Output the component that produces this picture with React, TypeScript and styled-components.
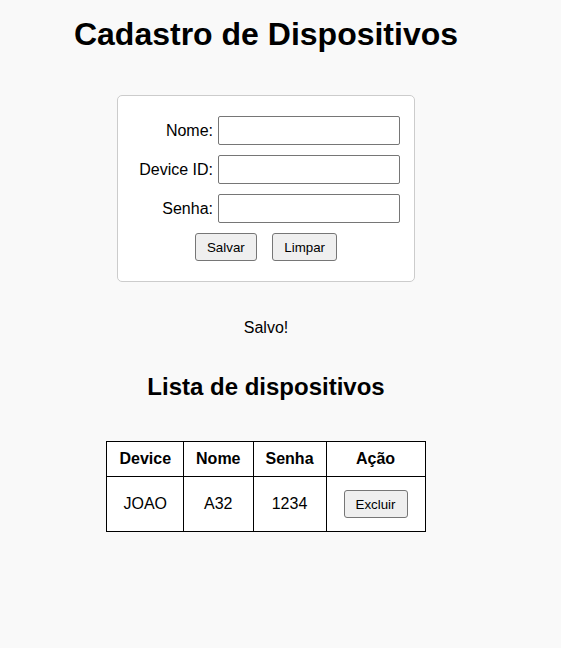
import React from "react";
import styled, { createGlobalStyle } from "styled-components";

const GlobalStyle = createGlobalStyle`
  html, body {
    margin: 0;
    padding: 0;
    background: #f9f9f9;
  }
  body {
    font-family: "Liberation Sans", Arial, sans-serif;
    color: #000;
  }
`;

const Page = styled.div`
  width: 532px;
  display: flex;
  flex-direction: column;
  align-items: center;
  text-align: center;
`;

const Title = styled.h1`
  font-size: 32px;
  font-weight: bold;
  margin: 16px 0 0;
  line-height: normal;
`;

const Card = styled.form`
  box-sizing: border-box;
  width: 298px;
  margin-top: 42px;
  padding: 20px 14px;
  background: #fff;
  border: 1px solid #ccc;
  border-radius: 5px;
  display: grid;
  grid-template-columns: 81px 182px;
  column-gap: 5px;
  row-gap: 10px;
  align-items: center;
`;

const Label = styled.label`
  font-size: 16px;
  text-align: right;
  white-space: nowrap;
`;

const Input = styled.input`
  box-sizing: border-box;
  width: 182px;
  height: 29px;
  margin: 0;
  padding: 2px 4px;
  border: 1px solid #767676;
  border-radius: 2px;
  background: #fff;
  font-family: "Liberation Sans", Arial, sans-serif;
  font-size: 13.333px;
`;

const ButtonRow = styled.div`
  grid-column: 1 / -1;
  display: flex;
  justify-content: center;
  gap: 15.5px;
`;

const Button = styled.button<{ $inCell?: boolean }>`
  box-sizing: border-box;
  height: 28px;
  padding: 0 11px;
  margin: ${(p) => (p.$inCell ? "5px" : "0")};
  border: 1px solid #767676;
  border-radius: 3px;
  background: #efefef;
  color: #000;
  font-family: "Liberation Sans", Arial, sans-serif;
  font-size: 13.333px;
  cursor: pointer;
  vertical-align: middle;
`;

const Status = styled.p`
  margin: 37px 0 0;
  font-size: 16px;
  line-height: normal;
`;

const SubTitle = styled.h2`
  margin: 36px 0 0;
  font-size: 24px;
  font-weight: bold;
  line-height: normal;
`;

const Table = styled.table`
  margin-top: 40px;
  border-collapse: collapse;
  background: #fff;
`;

const Th = styled.th`
  border: 1px solid #000;
  padding: 8px 12px;
  font-size: 16px;
  font-weight: bold;
`;

const Td = styled.td`
  border: 1px solid #000;
  padding: 8px 12px;
  font-size: 16px;
  vertical-align: middle;
`;

const devices = [{ device: "JOAO", nome: "A32", senha: "1234" }];

export default function App() {
  return (
    <>
      <GlobalStyle />
      <Page>
        <Title>Cadastro de Dispositivos</Title>
        <Card onSubmit={(e) => e.preventDefault()}>
          <Label>Nome:</Label>
          <Input type="text" />
          <Label>Device ID:</Label>
          <Input type="text" />
          <Label>Senha:</Label>
          <Input type="password" />
          <ButtonRow>
            <Button type="submit">Salvar</Button>
            <Button type="button">Limpar</Button>
          </ButtonRow>
        </Card>
        <Status>Salvo!</Status>
        <SubTitle>Lista de dispositivos</SubTitle>
        <Table>
          <thead>
            <tr>
              <Th>Device</Th>
              <Th>Nome</Th>
              <Th>Senha</Th>
              <Th>Ação</Th>
            </tr>
          </thead>
          <tbody>
            {devices.map((d) => (
              <tr key={d.device}>
                <Td>{d.device}</Td>
                <Td>{d.nome}</Td>
                <Td>{d.senha}</Td>
                <Td>
                  <Button $inCell type="button">
                    Excluir
                  </Button>
                </Td>
              </tr>
            ))}
          </tbody>
        </Table>
      </Page>
    </>
  );
}
